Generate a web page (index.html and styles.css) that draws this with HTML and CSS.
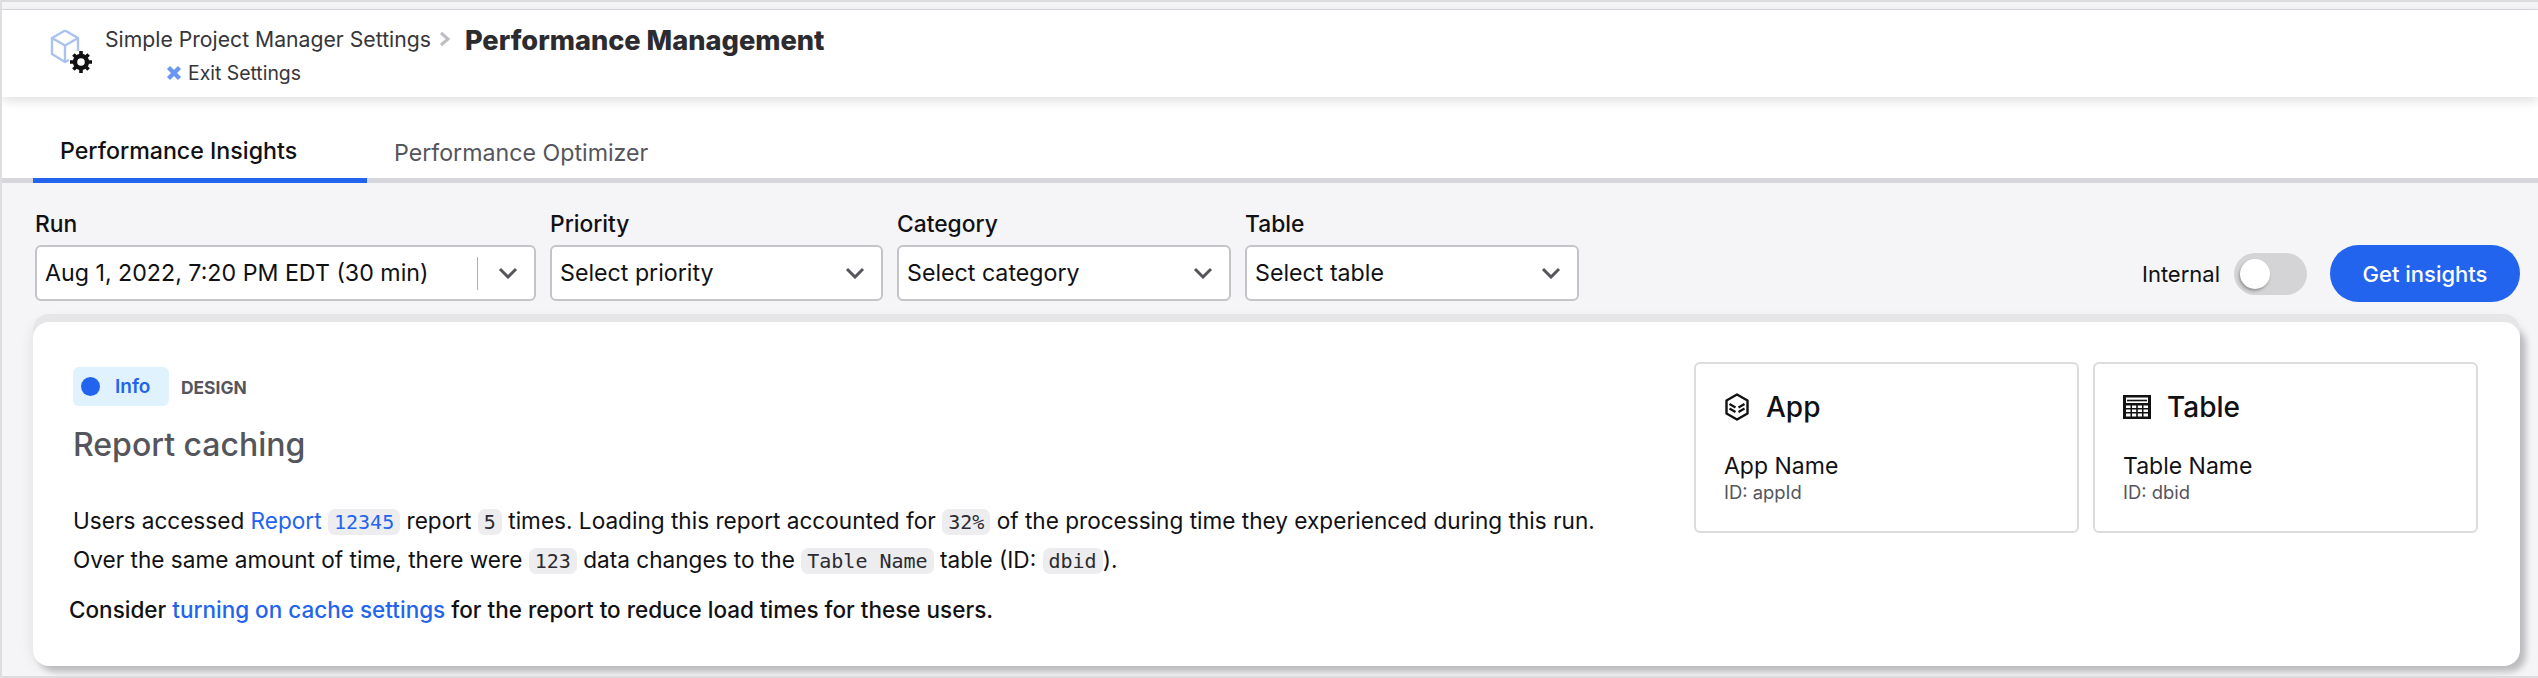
FILE: index.html
```html
<!DOCTYPE html>
<html lang="en">
<head>
<meta charset="utf-8">
<title>Performance Management</title>
<link rel="stylesheet" href="styles.css">
</head>
<body>
<div class="frame">
  <div class="topstrip"></div>
  <header class="header">
    <svg class="logo" width="52" height="60" viewBox="0 0 52 60" aria-hidden="true">
      <g fill="none" stroke="#a9c3ee" stroke-width="2.4" stroke-linejoin="round">
        <path d="M17 2.5 L30 10 V23 M17 2.5 L4 10 V26 L17 34 L21 32 M4 10 L17 17.5 L30 10 M17 17.5 V34"/>
      </g>
      <g transform="translate(33 34)">
        <circle r="6" fill="none" stroke="#111" stroke-width="4.4"/>
        <g stroke="#111" stroke-width="3.6">
          <path d="M0 -11 V-6 M0 11 V6 M-11 0 H-6 M11 0 H6 M-7.6 -7.6 L-4.5 -4.5 M7.6 7.6 L4.5 4.5 M-7.6 7.6 L-4.5 4.5 M7.6 -7.6 L4.5 -4.5"/>
        </g>
      </g>
    </svg>
    <div class="crumbs">
      <div class="crumb-row">
        <span class="crumb">Simple Project Manager Settings</span>
        <svg class="crumb-sep" width="12" height="16" viewBox="0 0 12 16" aria-hidden="true"><path d="M2 2 L9 8 L2 14" fill="none" stroke="#bdbdc2" stroke-width="3"/></svg>
        <span class="page-title">Performance Management</span>
      </div>
      <div class="exit-row">
        <svg width="16" height="16" viewBox="0 0 16 16" aria-hidden="true"><path d="M2.5 2.5 L13.5 13.5 M13.5 2.5 L2.5 13.5" stroke="#6b97f2" stroke-width="4.4"/></svg>
        <span class="exit">Exit Settings</span>
      </div>
    </div>
  </header>

  <nav class="tabs">
    <a class="tab tab-active">Performance Insights</a>
    <a class="tab">Performance Optimizer</a>
  </nav>

  <main class="content">
    <section class="filters">
      <div class="field">
        <label class="field-label">Run</label>
        <div class="select select-run">
          <span class="select-text">Aug 1, 2022, 7:20 PM EDT (30 min)</span>
          <span class="select-divider"></span>
          <svg class="chev" width="20" height="12" viewBox="0 0 20 12" aria-hidden="true"><path d="M2 2 L10 10 L18 2" fill="none" stroke="#55555c" stroke-width="3"/></svg>
        </div>
      </div>
      <div class="field">
        <label class="field-label">Priority</label>
        <div class="select select-priority">
          <span class="select-text">Select priority</span>
          <svg class="chev" width="20" height="12" viewBox="0 0 20 12" aria-hidden="true"><path d="M2 2 L10 10 L18 2" fill="none" stroke="#55555c" stroke-width="3"/></svg>
        </div>
      </div>
      <div class="field">
        <label class="field-label">Category</label>
        <div class="select select-category">
          <span class="select-text">Select category</span>
          <svg class="chev" width="20" height="12" viewBox="0 0 20 12" aria-hidden="true"><path d="M2 2 L10 10 L18 2" fill="none" stroke="#55555c" stroke-width="3"/></svg>
        </div>
      </div>
      <div class="field">
        <label class="field-label">Table</label>
        <div class="select select-table">
          <span class="select-text">Select table</span>
          <svg class="chev" width="20" height="12" viewBox="0 0 20 12" aria-hidden="true"><path d="M2 2 L10 10 L18 2" fill="none" stroke="#55555c" stroke-width="3"/></svg>
        </div>
      </div>
      <div class="actions">
        <span class="toggle-label">Internal</span>
        <span class="toggle"><span class="knob"></span></span>
        <button class="primary">Get insights</button>
      </div>
    </section>

    <section class="card">
      <div class="card-main">
        <div class="tags">
          <span class="badge"><span class="dot"></span>Info</span>
          <span class="tag">DESIGN</span>
        </div>
        <h2 class="card-title">Report caching</h2>
        <p class="line line-first">Users accessed <a class="link">Report</a> <code class="code code-blue">12345</code> report <code class="code">5</code> times. Loading this report accounted for <code class="code">32%</code> of the processing time they experienced during this run.</p>
        <p class="line">Over the same amount of time, there were <code class="code">123</code> data changes to the <code class="code">Table Name</code> table (ID: <code class="code">dbid</code>).</p>
        <p class="line line-consider">Consider <a class="link">turning on cache settings</a> for the report to reduce load times for these users.</p>
      </div>
      <aside class="side">
        <div class="mini">
          <div class="mini-head">
            <svg width="26" height="28" viewBox="0 0 26 28" aria-hidden="true">
              <path d="M13 1.5 L23.5 7.5 V20.5 L13 26.5 L2.5 20.5 V7.5 Z" fill="none" stroke="#111" stroke-width="2.4" stroke-linejoin="round"/>
              <path d="M5.5 11 L11.5 14.5 M20.5 11 L14.5 14.5 M5.5 15.5 L11.5 19 M20.5 15.5 L14.5 19" fill="none" stroke="#111" stroke-width="2.2"/>
            </svg>
            <span>App</span>
          </div>
          <div class="mini-name">App Name</div>
          <div class="mini-id">ID: appId</div>
        </div>
        <div class="mini">
          <div class="mini-head">
            <svg width="28" height="24" viewBox="0 0 28 24" aria-hidden="true">
              <path fill-rule="evenodd" fill="#111" d="M0 0 H28 V24 H0 Z M3 2.5 V8 H25 V2.5 Z M3 10.5 V13 H7.5 V10.5 Z M9 10.5 V13 H13.2 V10.5 Z M14.8 10.5 V13 H19 V10.5 Z M20.5 10.5 V13 H25 V10.5 Z M3 14.5 V17 H7.5 V14.5 Z M9 14.5 V17 H13.2 V14.5 Z M14.8 14.5 V17 H19 V14.5 Z M20.5 14.5 V17 H25 V14.5 Z M3 18.5 V21.5 H7.5 V18.5 Z M9 18.5 V21.5 H13.2 V18.5 Z M14.8 18.5 V21.5 H19 V18.5 Z M20.5 18.5 V21.5 H25 V18.5 Z"/>
              <path d="M4 5.5 H24" stroke="#111" stroke-width="1.6"/>
            </svg>
            <span>Table</span>
          </div>
          <div class="mini-name">Table Name</div>
          <div class="mini-id">ID: dbid</div>
        </div>
      </aside>
    </section>
  </main>
  <div class="bottomstrip"></div>
</div>
</body>
</html>
```

FILE: styles.css
```css
* { box-sizing: border-box; }
html, body { margin: 0; padding: 0; }
body {
  background: #f5f5f8;
  color: #111114;
  font-family: "Inter", "Noto Sans", sans-serif;
  font-size: 22px;
}
.frame {
  width: 2538px;
  height: 678px;
  border-left: 2px solid #dedee0;
  overflow: hidden;
  display: flex;
  flex-direction: column;
  background: #f5f5f8;
}
.topstrip {
  height: 10px;
  flex: none;
  background: #f4f4f6;
  border-top: 2px solid #dcdcde;
  border-bottom: 1px solid #dadade;
}
.header {
  flex: none;
  height: 87px;
  background: #fff;
  display: flex;
  align-items: flex-start;
  padding: 18px 0 0 46px;
  box-shadow: 0 4px 10px rgba(0, 0, 0, 0.12);
  position: relative;
}
.logo { flex: none; margin-right: 5px; }
.crumbs { display: flex; flex-direction: column; }
.crumb-row { display: flex; align-items: center; height: 38px; margin-top: -8px; }
.crumb { font-size: 21.2px; color: #35353a; }
.crumb-sep { margin: 0 14px 0 8px; }
.page-title { font-size: 27.2px; font-weight: 800; color: #2b2b30; position: relative; top: 1px; }
.exit-row { display: flex; align-items: center; gap: 6px; margin: 3px 0 0 61px; }
.exit { font-size: 19.4px; color: #35353a; }
.tabs {
  flex: none;
  height: 86px;
  background: #fff;
  display: flex;
  align-items: stretch;
  padding-left: 31px;
  border-bottom: 5px solid #d6d6da;
}
.tab {
  display: flex;
  align-items: center;
  width: 334px;
  margin-bottom: -5px;
  padding: 26px 0 0 27px;
  font-size: 23.2px;
  color: #55555c;
}
.tab-active { color: #111114; font-weight: 500; border-bottom: 5px solid #2264ee; }
.tab + .tab { width: 360px; }
.content { flex: 1; display: flex; flex-direction: column; padding: 0 18px 0 31px; min-height: 0; }
.filters { display: flex; align-items: flex-end; height: 139px; flex: none; padding: 0 0 21px 2px; }
.field { display: flex; flex-direction: column; margin-right: 14px; }
.field-label { font-size: 22.8px; line-height: 28px; margin-bottom: 7px; font-weight: 500; }
.select {
  height: 56px;
  background: #fff;
  border: 2px solid #c4c4c8;
  border-radius: 6px;
  display: flex;
  align-items: center;
  padding: 0 16px 0 8px;
}
.select-run { width: 501px; }
.select-priority { width: 333px; }
.select-category { width: 334px; }
.select-table { width: 334px; }
.select-text { flex: 1; font-size: 23.2px; }
.select-divider { width: 1px; height: 33px; background: #b0b0b4; margin-right: 20px; }
.chev { flex: none; }
.actions { margin-left: auto; display: flex; align-items: center; align-self: flex-end; height: 57px; margin-bottom: -1px; }
.toggle-label { font-size: 22px; margin-right: 14px; }
.toggle {
  width: 73px;
  height: 42px;
  border-radius: 21px;
  background: #d4d4d6;
  display: flex;
  align-items: center;
  padding-left: 6px;
  margin-right: 23px;
}
.knob { width: 30px; height: 30px; border-radius: 50%; background: #fff; box-shadow: -1px 2px 3px rgba(0, 0, 0, 0.3); }
.primary {
  width: 190px;
  height: 57px;
  border: 0;
  border-radius: 29px;
  background: #2264ee;
  color: #fff;
  font: inherit;
  font-size: 22px;
  font-weight: 500;
}
.card {
  flex: none;
  height: 344px;
  background: #fff;
  border-radius: 16px;
  display: flex;
  box-shadow: 0 -8px 0 #e6e6e9, 0 0 14px rgba(0, 0, 0, 0.1), 6px 6px 6px rgba(0, 0, 0, 0.2);
  padding: 40px 42px 0 40px;
}
.card-main { flex: 1; min-width: 0; }
.tags { display: flex; align-items: center; height: 39px; margin-top: 5px; }
.badge {
  width: 96px;
  height: 39px;
  border-radius: 6px;
  background: #e0f2fe;
  color: #2264ee;
  display: flex;
  align-items: center;
  gap: 15px;
  padding-left: 8px;
  font-size: 19px;
  font-weight: 600;
}
.dot { width: 19px; height: 19px; border-radius: 50%; background: #2264ee; }
.tag { margin-left: 12px; font-size: 17.4px; font-weight: 700; color: #55555c; position: relative; top: 1px; }
.card-title { font-size: 32px; font-weight: 500; color: #55555c; margin: 17px 0 0; line-height: 44px; }
.line { margin: 0; font-size: 22.6px; line-height: 38px; white-space: nowrap; }
.line-first { margin-top: 35px; }
.line-consider { margin: 11px 0 0 -4px; font-weight: 500; font-size: 22.5px; }
.link { color: #2264ee; }
.code {
  font-family: "DejaVu Sans Mono", "Liberation Mono", monospace;
  font-size: 20px;
  background: #ededf0;
  border-radius: 7px;
  padding: 1px 6px;
  color: #2b2b30;
}
.code-blue { color: #2264ee; }
.side { flex: none; display: flex; gap: 14px; align-items: flex-start; }
.mini {
  width: 385px;
  height: 171px;
  border: 2px solid #dcdcdf;
  border-radius: 6px;
  padding: 23px 28px 0 28px;
}
.mini-head { display: flex; align-items: center; gap: 16px; font-size: 28px; font-weight: 500; height: 40px; }
.mini-name { margin-top: 24px; font-size: 23px; line-height: 30px; }
.mini-id { font-size: 18.4px; line-height: 22px; color: #55555c; }
.bottomstrip { flex: none; height: 2px; background: #dcdcde; margin-top: 10px; }
```
